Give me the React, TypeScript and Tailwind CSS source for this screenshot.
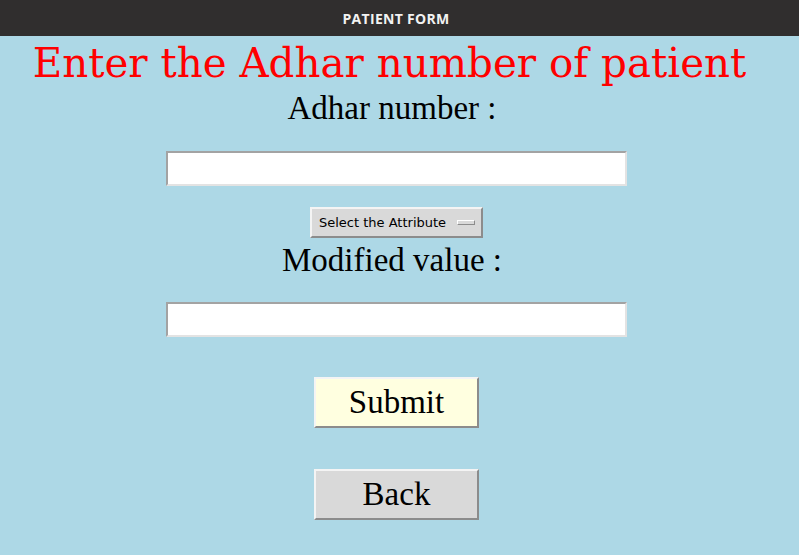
function Entry() {
  return (
    <div className="h-[35px] w-[461px] border-2 border-t-[#a3a3a3] border-l-[#a3a3a3] border-b-[#e3e3e3] border-r-[#e3e3e3] bg-white" />
  );
}

function TkButton({ label, bg }: { label: string; bg: string }) {
  return (
    <button
      className={`flex h-[51px] w-[165px] items-center justify-center border-2 border-t-[#f4f4f4] border-l-[#f4f4f4] border-b-[#8c8c8c] border-r-[#8c8c8c] ${bg} font-['Liberation_Serif',serif] text-[33px] leading-none text-black`}
    >
      {label}
    </button>
  );
}

export default function App() {
  return (
    <div className="h-[555px] w-[799px] overflow-hidden bg-[#add8e6]">
      <div className="flex h-[36px] items-center justify-center bg-[#302e2e] pr-[7px] font-['Open_Sans',sans-serif] text-[14px] font-bold tracking-[0.3px] text-[#f2f2f2]">
        PATIENT FORM
      </div>

      <div className="flex w-[793px] flex-col items-center">
        <h1 className="mt-[7px] pr-[14px] font-['DejaVu_Serif',serif] text-[40.4px] leading-[40px] text-[#ff0000]">
          Enter the Adhar number of patient
        </h1>
        <p className="mt-[9px] pr-[9px] font-['Liberation_Serif',serif] text-[33px] leading-[33px] text-black">
          Adhar number :
        </p>
        <div className="mt-[26px]">
          <Entry />
        </div>

        <div className="mt-[21px] flex h-[31px] w-[173px] items-center justify-between border-2 border-t-[#f4f4f4] border-l-[#f4f4f4] border-b-[#8c8c8c] border-r-[#8c8c8c] bg-[#d9d9d9] pl-[7px] pr-[6px] font-['DejaVu_Sans',sans-serif] text-[13px] text-black">
          <span>Select the Attribute</span>
          <span className="h-[5px] w-[18px] border border-t-[#ffffff] border-l-[#ffffff] border-b-[#8c8c8c] border-r-[#8c8c8c] bg-[#d9d9d9]" />
        </div>

        <p className="mt-[6px] pr-[9px] font-['Liberation_Serif',serif] text-[33px] leading-[33px] text-black">
          Modified value :
        </p>
        <div className="mt-[25px]">
          <Entry />
        </div>

        <div className="mt-[40px]">
          <TkButton label="Submit" bg="bg-[#ffffe0]" />
        </div>
        <div className="mt-[41px]">
          <TkButton label="Back" bg="bg-[#d9d9d9]" />
        </div>
      </div>
    </div>
  );
}
